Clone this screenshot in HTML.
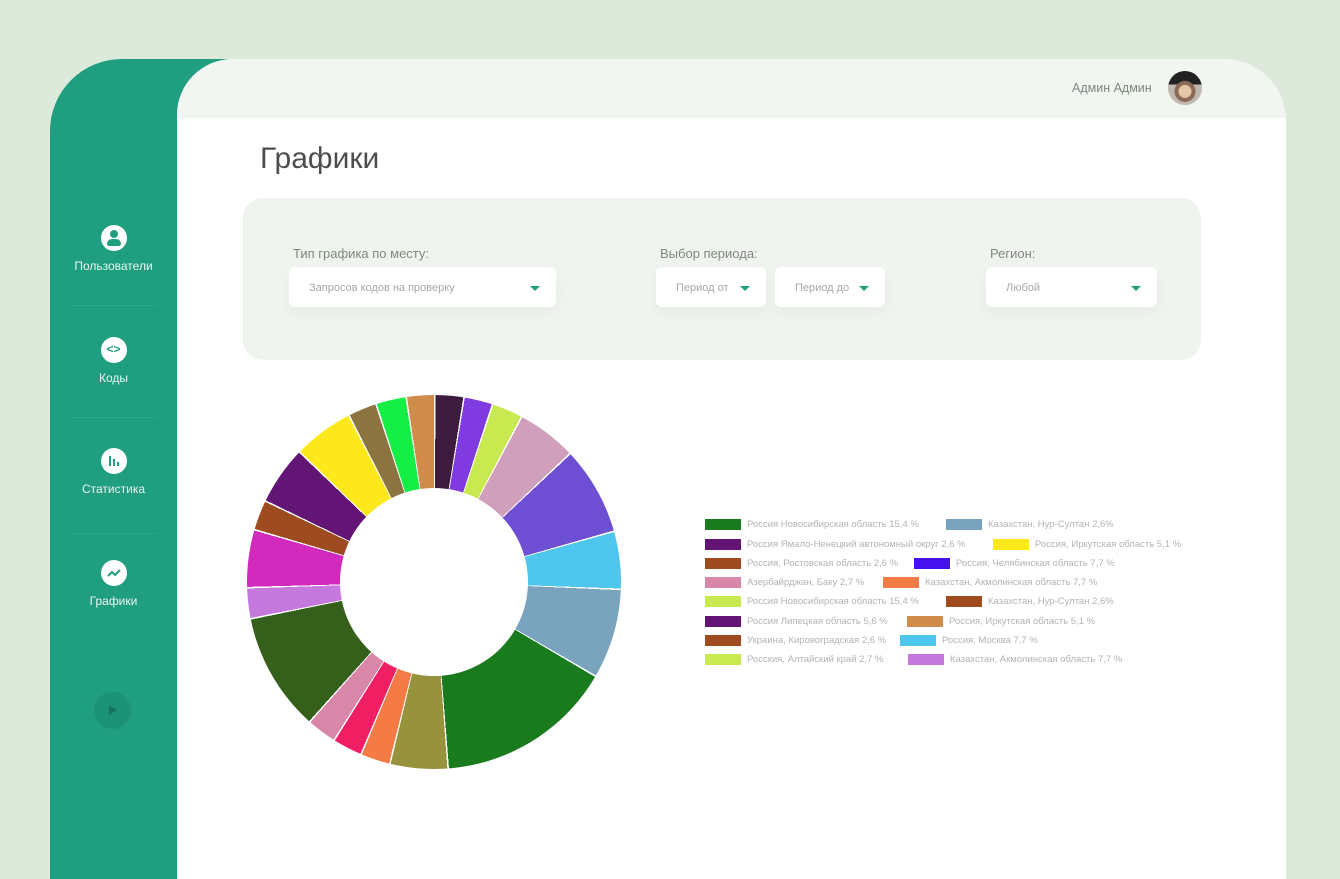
<!DOCTYPE html>
<html><head><meta charset="utf-8"><style>
*{margin:0;padding:0;box-sizing:border-box}
body{width:1340px;height:858px;background:#dde9da;position:relative;overflow:hidden;font-family:"Liberation Sans","DejaVu Sans",sans-serif}
.side{position:absolute;left:50px;top:59px;width:200px;height:820px;background:#1f9e80;border-top-left-radius:72px}
.main{position:absolute;left:177px;top:59px;width:1109px;height:820px;background:#fff;border-top-left-radius:56px;border-top-right-radius:62px;overflow:hidden}
.hdr{height:59px;background:#f1f6f0}
.nav{position:absolute;left:50px;width:127px;text-align:center;color:#e8f6f1;font-size:12px}
.ic{width:26px;height:26px;border-radius:50%;background:#fff;margin:0 auto 8px;position:relative}
.sep{position:absolute;left:70px;width:86px;height:1px;background:#2aa98b}
.lbl{position:absolute;font-size:13px;color:#7d8a7b}
.sel{position:absolute;top:267px;height:40px;background:#fff;border-radius:6px;box-shadow:0 6px 14px rgba(0,0,0,.04);font-size:11px;color:#a5a9a5;line-height:43px;padding-left:20px}
.sel:after{content:"";position:absolute;right:16px;top:19px;border-left:5px solid transparent;border-right:5px solid transparent;border-top:5px solid #1f9e80}
.lg{position:absolute;font-size:9.5px;color:#b3b3b3;height:12px;line-height:12px;white-space:nowrap}
.lg i{display:inline-block;width:36px;height:11px;vertical-align:top;margin-right:6px}
</style></head><body>
<div class="side"></div>
<div class="main"><div class="hdr"></div></div>
<div style="position:absolute;left:1072px;top:81px;font-size:12.5px;color:#7c8a7a">Админ Админ</div>
<div style="position:absolute;left:1168px;top:71px;width:34px;height:34px;border-radius:50%;background:radial-gradient(circle at 50% 60%,#e6c7a8 0 6px,#8a6a55 7px 10px,transparent 11px),linear-gradient(#222 0 40%,#bfb7b0 40%)"></div>
<div style="position:absolute;left:260px;top:142px;font-size:30px;color:#4d4d4d">Графики</div>

<div class="nav" style="top:225px"><div class="ic"><div style="position:absolute;left:9px;top:5px;width:8px;height:8px;border-radius:50%;background:#1f9e80"></div><div style="position:absolute;left:6px;top:14px;width:14px;height:7px;border-radius:7px 7px 3px 3px;background:#1f9e80"></div></div>Пользователи</div>
<div class="sep" style="top:305px"></div>
<div class="nav" style="top:337px"><div class="ic" style="color:#1f9e80;font-size:12px;line-height:25px;font-weight:bold">&lt;&gt;</div>Коды</div>
<div class="sep" style="top:417px"></div>
<div class="nav" style="top:448px"><div class="ic"><div style="position:absolute;left:8px;top:8px;width:2px;height:10px;background:#1f9e80"></div><div style="position:absolute;left:12px;top:11px;width:2px;height:7px;background:#1f9e80"></div><div style="position:absolute;left:16px;top:14px;width:2px;height:4px;background:#1f9e80"></div></div>Статистика</div>
<div class="sep" style="top:533px"></div>
<div class="nav" style="top:560px"><div class="ic"><svg width="26" height="26" style="position:absolute;left:0;top:0"><path d="M7 16l4-4 3 3 5-5" stroke="#1f9e80" stroke-width="2" fill="none"/></svg></div>Графики</div>
<div style="position:absolute;left:94px;top:692px;width:37px;height:37px;border-radius:50%;background:#1c9276"><div style="position:absolute;left:15px;top:13px;border-top:5px solid transparent;border-bottom:5px solid transparent;border-left:8px solid #14735d"></div></div>

<div style="position:absolute;left:243px;top:198px;width:958px;height:162px;background:#eff5ee;border-radius:20px"></div>
<div class="lbl" style="left:293px;top:246px">Тип графика по месту:</div>
<div class="lbl" style="left:660px;top:246px">Выбор периода:</div>
<div class="lbl" style="left:990px;top:246px">Регион:</div>
<div class="sel" style="left:289px;width:267px">Запросов кодов на проверку</div>
<div class="sel" style="left:656px;width:110px">Период от</div>
<div class="sel" style="left:775px;width:110px">Период до</div>
<div class="sel" style="left:986px;width:171px">Любой</div>

<div style="position:absolute;left:247px;top:395px;width:374px;height:374px;border-radius:50%;background:conic-gradient(#fff 0 .5deg,#3d1c3f .5deg 9deg,#fff 9deg 9.5deg,#7f3ae0 9.5deg 18deg,#fff 18deg 18.5deg,#c8ea50 18.5deg 27.7deg,#fff 27.7deg 28.2deg,#cf9fbc 28.2deg 46.4deg,#fff 46.4deg 46.9deg,#6e4ed2 46.9deg 74deg,#fff 74deg 74.5deg,#4ec6ee 74.5deg 92deg,#fff 92deg 92.5deg,#7aa3bd 92.5deg 120deg,#fff 120deg 120.5deg,#1a7b1e 120.5deg 175.4deg,#fff 175.4deg 175.9deg,#97923c 175.9deg 193.4deg,#fff 193.4deg 193.9deg,#f47b45 193.9deg 202.7deg,#fff 202.7deg 203.2deg,#f01f64 203.2deg 212deg,#fff 212deg 212.5deg,#d887a8 212.5deg 221.4deg,#fff 221.4deg 221.9deg,#35601c 221.9deg 258.4deg,#fff 258.4deg 258.9deg,#c679dc 258.9deg 268deg,#fff 268deg 268.5deg,#d12abd 268.5deg 286deg,#fff 286deg 286.5deg,#9d4b1f 286.5deg 295.4deg,#fff 295.4deg 295.9deg,#631575 295.9deg 313.8deg,#fff 313.8deg 314.3deg,#fde81c 314.3deg 332.7deg,#fff 332.7deg 333.2deg,#8b7440 333.2deg 341.7deg,#fff 341.7deg 342.2deg,#15ee44 342.2deg 351.2deg,#fff 351.2deg 351.7deg,#cf8c4b 351.7deg 360deg)"></div>
<div style="position:absolute;left:340px;top:488px;width:188px;height:188px;border-radius:50%;background:#fff"></div>

<div class="lg" style="left:705px;top:519px"><i style="background:#1a7b1e"></i>Россия Новосибирская область 15,4 %</div>
<div class="lg" style="left:946px;top:519px"><i style="background:#7aa3bd"></i>Казахстан, Нур-Султан 2,6%</div>
<div class="lg" style="left:705px;top:539px"><i style="background:#631575"></i>Россия Ямало-Ненецкий автономный округ 2,6 %</div>
<div class="lg" style="left:993px;top:539px"><i style="background:#fde81c"></i>Россия, Иркутская область 5,1 %</div>
<div class="lg" style="left:705px;top:558px"><i style="background:#9d4b1f"></i>Россия, Ростовская область 2,6 %</div>
<div class="lg" style="left:914px;top:558px"><i style="background:#4312ee"></i>Россия, Челябинская область 7,7 %</div>
<div class="lg" style="left:705px;top:577px"><i style="background:#d887a8"></i>Азербайрджан, Баку 2,7 %</div>
<div class="lg" style="left:883px;top:577px"><i style="background:#f47b45"></i>Казахстан, Акмолинская область 7,7 %</div>
<div class="lg" style="left:705px;top:596px"><i style="background:#c8ea50"></i>Россия Новосибирская область 15,4 %</div>
<div class="lg" style="left:946px;top:596px"><i style="background:#9d4b1f"></i>Казахстан, Нур-Султан 2,6%</div>
<div class="lg" style="left:705px;top:616px"><i style="background:#631575"></i>Россия Липецкая область 5,6 %</div>
<div class="lg" style="left:907px;top:616px"><i style="background:#cf8c4b"></i>Россия, Иркутская область 5,1 %</div>
<div class="lg" style="left:705px;top:635px"><i style="background:#9d4b1f"></i>Украина, Кировоградская 2,6 %</div>
<div class="lg" style="left:900px;top:635px"><i style="background:#4ec6ee"></i>Россия, Москва 7,7 %</div>
<div class="lg" style="left:705px;top:654px"><i style="background:#c8ea50"></i>Росския, Алтайский край 2,7 %</div>
<div class="lg" style="left:908px;top:654px"><i style="background:#c679dc"></i>Казахстан, Акмолинская область 7,7 %</div>
</body></html>
